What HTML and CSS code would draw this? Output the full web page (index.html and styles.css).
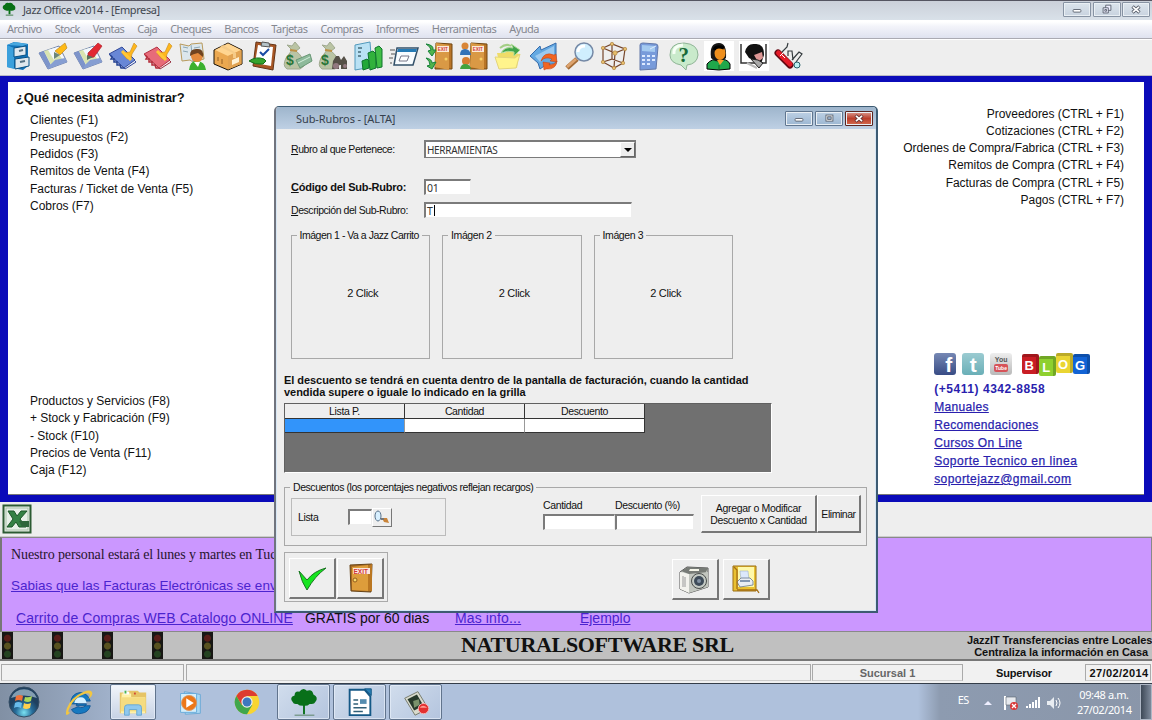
FILE: index.html
```html
<!DOCTYPE html>
<html lang="es">
<head>
<meta charset="utf-8">
<title>Jazz Office v2014</title>
<link rel="stylesheet" href="styles.css">
</head>
<body>
<div class="screen">
  <header class="titlebar">
    <svg class="app-icon" viewBox="0 0 16 16"><path d="M1 7Q0 4 3 3Q4 0 7 1Q11 0 12 3Q15 4 14 8Q11 10 9 9L9 13H7L7 9Q3 10 1 7Z" fill="#087016"/><path d="M4 14H12" stroke="#3c7a44"/></svg>
    <span class="title-text">Jazz Office v2014 - [Empresa]</span>
    <div class="winbtns">
      <span class="wb"><svg viewBox="0 0 28 15"><rect x="9.500" y="7.500" width="9" height="3" rx="1" fill="#fff" stroke="#555c68"/></svg></span>
      <span class="wb"><svg viewBox="0 0 28 15" fill="#eef" stroke="#555c68"><path d="M12.500 2.500H18.500V8.500H12.500Z"/><path d="M9.500 5.500H15.500V11.500H9.500Z"/><path d="M11.500 7.500H13.500V9.500H11.500Z"/></svg></span>
      <span class="wb"><svg viewBox="0 0 28 15"><path d="M10 4L18 11M18 4L10 11" stroke="#555c68" stroke-width="4"/><path d="M10.500 4.500L17.500 10.500M17.500 4.500L10.500 10.500" stroke="#fff" stroke-width="2"/></svg></span>
    </div>
  </header>
  <nav class="menu"><span>Archivo</span><span>Stock</span><span>Ventas</span><span>Caja</span><span>Cheques</span><span>Bancos</span><span>Tarjetas</span><span>Compras</span><span>Informes</span><span>Herramientas</span><span>Ayuda</span></nav>
  <div class="toolbar">
    <svg viewBox="0 0 30 30"><path d="M4 4L11 1L25 3V25L20 29L4 26Z" fill="#1272b8"/><path d="M4 4L11 7V28L4 26Z" fill="#3ba0dc"/><path d="M4 4L12 1L25 3L20 5Z" fill="#48a8df"/><path d="M11 7L23 5V14L11 16Z" fill="#dfe8ef" stroke="#075084"/><path d="M12 18L26 16V25L12 28Z" fill="#dfe7ed" stroke="#075084"/><path d="M16 10L20 9M17 21L22 20" stroke="#547184" stroke-width="2"/></svg>
    <svg viewBox="0 0 30 30"><path d="M1 12L21 5L29 21L10 28Z" fill="#f5f7fb" stroke="#7184ad"/><path d="M1 12L10 28L14 26L6 10Z" fill="#7d94ca"/><path d="M6 10L17 7L26 21L14 26Z" fill="#d9e4b1"/><path d="M10 9L20 6L22 11L16 19Z" fill="#f3f8ff"/><path d="M12 24L17 19L27 17L29 21L10 28Z" fill="#869ed2"/><path d="M17 10L27 2L29 7L22 14Z" fill="#ffba14" stroke="#c08a22" stroke-width=".7"/><path d="M16 11L22 14L16 18Z" fill="#6c867a"/></svg>
    <svg viewBox="0 0 30 30"><path d="M1 12L21 5L29 21L10 28Z" fill="#f5f7fb" stroke="#7184ad"/><path d="M1 12L10 28L14 26L6 10Z" fill="#7d94ca"/><path d="M6 10L17 7L26 21L14 26Z" fill="#d9e4b1"/><path d="M10 9L20 6L22 11L16 19Z" fill="#f3f8ff"/><path d="M12 24L17 19L27 17L29 21L10 28Z" fill="#869ed2"/><path d="M15 12L25 2L29 5L21 16L15 17Z" fill="#e22832" stroke="#ae2730" stroke-width=".7"/><path d="M14 14L20 16L14 19Z" fill="#58715f"/></svg>
    <svg viewBox="0 0 30 30"><path d="M3 15L15 8L28 21L17 28Z" fill="#edf0fa" stroke="#344b99"/><path d="M1 13L14 6L27 19L16 27Z" fill="#6887d6" stroke="#344b99"/><path d="M2 14L4 16L3 18L6 18L6 21L9 21L9 24L12 24L13 27L16 27" fill="none" stroke="#234192" stroke-width="1.500"/><path d="M14 12L22 11L26 2L29 5L24 13L23 18L19 18Z" fill="#ffb71c" stroke="#c58a22" stroke-width=".6"/><path d="M14 10L23 19" stroke="#ffc739" stroke-width="3"/></svg>
    <svg viewBox="0 0 30 30"><path d="M3 15L15 8L28 21L17 28Z" fill="#fbeaed" stroke="#973141"/><path d="M1 13L14 6L27 19L16 27Z" fill="#e76b79" stroke="#b43344"/><path d="M2 14L4 16L3 18L6 18L6 21L9 21L9 24L12 24L13 27L16 27" fill="none" stroke="#b32a37" stroke-width="1.500"/><path d="M14 12L22 11L26 2L29 5L24 13L23 18L19 18Z" fill="#ffb71c" stroke="#c58a22" stroke-width=".6"/><path d="M14 10L23 19" stroke="#ffc739" stroke-width="3"/></svg>
    <svg viewBox="0 0 30 30"><path d="M2 3L11 5L13 3L24 2L26 18L15 21L12 19L4 20Z" fill="#dce7ec" stroke="#b99a5c"/><path d="M13 4L15 21M5 6L10 7M5 10L10 11M16 7L22 6M16 10L22 9" stroke="#8ca7b5"/><path d="M11 29Q12 20 18 20Q27 20 28 29Z" fill="#3bb12f"/><circle cx="19" cy="15" r="6" fill="#e48b3d"/><path d="M12 14Q12 7 20 8Q26 8 25 16L20 12Q15 13 12 15Z" fill="#704420"/><path d="M16 21H22L20 26Z" fill="#fff"/></svg>
    <svg viewBox="0 0 30 30"><path d="M1 9L15 2L29 9V23L15 29L1 23Z" fill="#eba850" stroke="#171007"/><path d="M2 9L15 15L28 9L15 2.500Z" fill="#ffd590"/><path d="M15 15L28.500 9V23L15 28.500Z" fill="#e2a352"/><path d="M10 4L23 12V17L20 17V12L7 6Z" fill="#f5cb89"/><path d="M19 19L26 16V21L19 24Z" fill="#fff1d4"/><path d="M5 16V20M9 18V23" stroke="#966025"/></svg>
    <svg viewBox="0 0 30 30"><path d="M8 1L28 4L25 29L5 25Z" fill="#a85624" stroke="#653517"/><path d="M10 4L25 6L23 25L7 22Z" fill="#fff"/><path d="M14 1L21 2L22 6L13 5Z" fill="#b5c3c8" stroke="#555"/><path d="M12 11L15 14L21 8" fill="none" stroke="#194ba5" stroke-width="2"/><path d="M1 20Q8 15 16 18L18 20L15 23Q7 24 1 20Z" fill="#34a32e" stroke="#16711d"/></svg>
    <svg viewBox="0 0 30 30"><path d="M4 4L9 5L12 1L17 7L13 10Q21 16 21 25L17 28H4Q-1 25 3 17L9 9Z" fill="#bac4a4" stroke="#a0aa90"/><path d="M7 9L14 10" stroke="#bd9145" stroke-width="2"/><path d="M13 19L27 13L29 20L17 27Z" fill="#8dba9b" stroke="#6a9876"/><path d="M15 22L27 16" stroke="#d3eedb"/><text x="3" y="24" class="money">$</text></svg>
    <svg viewBox="0 0 30 30"><path d="M4 4L9 5L12 1L17 7L13 10Q21 16 21 25L17 28H4Q-1 25 3 17L9 9Z" fill="#bac4a4" stroke="#a0aa90"/><path d="M7 9L14 10" stroke="#bd9145" stroke-width="2"/><text x="3" y="24" class="money">$</text><path d="M15 20L18 15H21L23 19L26 15L29 20V28H23V24H21V28H14Z" fill="#555047"/><circle cx="18" cy="25" r="3" fill="#927980"/><circle cx="27" cy="25" r="2" fill="#927980"/></svg>
    <svg viewBox="0 0 30 30"><path d="M2 4L17 1L19 26L2 29Z" fill="#b9e1f4" stroke="#5299bc"/><path d="M5 7H9M5 11H8M5 15H8" stroke="#638897" stroke-width="2"/><path d="M9 20L14 18L16 20V27L10 29Z" fill="#22a839" stroke="#0e742d"/><path d="M15 12L20 10L23 13V27L17 29Z" fill="#31b13c" stroke="#0e742d"/><path d="M22 7L26 5L29 8V26L24 27Z" fill="#41be46" stroke="#0e742d"/></svg>
    <svg viewBox="0 0 30 30"><path d="M8 7H29L24 24H5Z" fill="#f8fcff" stroke="#325069" stroke-width="1.500"/><path d="M9 8H28L27 11H8Z" fill="#267bb5"/><path d="M12 15H20L18 20H10Z" fill="#fff" stroke="#778"/><path d="M1 9H6M2 13H6M0 17H4M1 22H3" stroke="#555"/></svg>
    <svg viewBox="0 0 30 30"><path d="M12 2L28 3V28L11 28Z" fill="#b97527" stroke="#724812"/><path d="M12 2L25 4V29L11 26Z" fill="#d99945"/><path d="M13 5H25V11H13Z" fill="#fbead8"/><text x="13.700" y="10" class="exit">EXIT</text><circle cx="22" cy="18" r="1.500" fill="#f7d166"/><path d="M2 3Q10 4 9 9L12 9L8 15L4 10L7 9Q7 6 2 3ZM2 17Q8 18 8 22L12 21L8 28L3 25L6 24Q6 20 2 17Z" fill="#50b44d" stroke="#17823a"/></svg>
    <svg viewBox="0 0 30 30"><path d="M12 2L28 3V28L11 28Z" fill="#b97527" stroke="#724812"/><path d="M12 2L25 4V29L11 26Z" fill="#d99945"/><path d="M13 5H25V11H13Z" fill="#fbead8"/><text x="13.700" y="10" class="exit">EXIT</text><circle cx="22" cy="18" r="1.500" fill="#f7d166"/><circle cx="6" cy="5" r="3.500" fill="#d98637"/><path d="M1 14Q1 8 6 8Q11 8 12 14Z" fill="#3272b8"/><circle cx="7" cy="20" r="4" fill="#d67d31"/><path d="M1 28Q2 23 6 23Q11 23 12 28Z" fill="#43a340"/></svg>
    <svg viewBox="0 0 30 30"><path d="M3 12H11L13 9L25 13L23 27L6 26Z" fill="#efdc68"/><path d="M1 16L21 17L26 13L22 27L5 28Z" fill="#fff48c" stroke="#e3d47b"/><path d="M7 12Q11 5 19 7L17 3L26 9L20 15L20 11Q14 9 7 12Z" fill="#41a44b" stroke="#afdc95"/><path d="M6 7Q12 2 17 5" stroke="#a5cf87" stroke-width="2" fill="none"/></svg>
    <svg viewBox="0 0 30 30"><path d="M1 15L11 5L12 9L27 2V23Q18 22 11 28L9 22Z" fill="#64a9e2" stroke="#356bab"/><path d="M6 15L25 5V14Q15 13 11 21Z" fill="#9ccaf0"/><path d="M12 20Q15 10 25 14L27 13L28 21L21 20L23 18Q16 15 12 20Z" fill="#f06522" stroke="#bd4219" stroke-width=".5"/><path d="M14 21L21 22L20 24Q25 24 28 20Q27 29 17 28L15 29Z" fill="#f06522" stroke="#bd4219" stroke-width=".5"/></svg>
    <svg viewBox="0 0 30 30"><path d="M3 27L13 18" stroke="#a36b36" stroke-width="5"/><path d="M3 26L12 18" stroke="#dda36e" stroke-width="3"/><circle cx="20" cy="11" r="9" fill="#cfeefe" stroke="#7589a6" stroke-width="1.500"/><path d="M14 11Q14 5 21 5" stroke="#fff" fill="none" stroke-width="3"/></svg>
    <svg viewBox="0 0 30 30"><path d="M4 7L13 3L26 8L24 22L15 27L4 21ZM4 7L16 12L26 8M16 12L15 27M13 3L13 18L4 21M13 18L24 22" fill="none" stroke="#75452a" stroke-width="1.200"/><g fill="#e5bd6d" stroke="#aa7b36" stroke-width=".6"><circle cx="4" cy="7" r="1.700"/><circle cx="13" cy="3" r="1.700"/><circle cx="26" cy="8" r="1.700"/><circle cx="24" cy="22" r="1.700"/><circle cx="15" cy="27" r="1.700"/><circle cx="4" cy="21" r="1.700"/><circle cx="16" cy="12" r="2.200"/></g></svg>
    <svg viewBox="0 0 30 30"><path d="M6 4Q6 2 9 2L22 3Q24 3 24 6L22 28L6 29Z" fill="#789bda" stroke="#6278a9"/><path d="M8 4L21 5L21 11L8 10Z" fill="#a4caf0"/><path d="M16 8L22 5" stroke="#dfebfc"/><g fill="#dce9ff"><path d="M8 14H11V16H8ZM13 14H16V16H13ZM18 14H21V16H18ZM8 18H11V20H8ZM13 18H16V20H13ZM18 18H21V20H18ZM8 22H11V24H8ZM13 22H16V24H13Z"/></g></svg>
    <svg viewBox="0 0 30 30"><path d="M12 24Q1 22 1 14Q1 2 15 2Q29 3 29 14Q28 23 18 24L17 29Z" fill="#c9eacb" stroke="#8fb496"/><path d="M5 13Q4 5 14 4" stroke="#f7fff6" stroke-width="3" fill="none"/><text x="9.500" y="20.500" class="question">?</text></svg>
    <svg class="whiteicon" viewBox="0 0 30 30"><path d="M3 28V23Q8 17 15 19Q23 17 26 23V28Q15 30 3 28Z" fill="#20a84b" stroke="#000"/><path d="M7 17Q5 2 15 2Q23 2 22 17L17 21L11 20Z" fill="#171717"/><ellipse cx="16" cy="12" rx="5.500" ry="7" fill="#ee8f1e"/><path d="M10 9Q12 4 20 7" stroke="#000" stroke-width="3" fill="none"/><path d="M13 19L16 24L20 19Z" fill="#f5a22e"/><path d="M15 24V28" stroke="#145e23"/></svg>
    <svg class="whiteicon" viewBox="0 0 30 30"><path d="M2 3V22H27V3" fill="#fff" stroke="#333" stroke-width="1.500"/><path d="M6 11Q8 2 16 3Q25 2 25 14L22 23L10 17Z" fill="#111"/><path d="M15 14L23 11L24 17L19 21Z" fill="#dc9694"/><path d="M12 18L20 27L24 22L19 19Z" fill="#aaa" stroke="#222"/><path d="M8 22L18 27" stroke="#bbb" stroke-width="2"/></svg>
    <svg viewBox="0 0 30 30"><path d="M4 12L16 24" stroke="#630711" stroke-width="7" stroke-linecap="round"/><path d="M4.500 12L16 23" stroke="#e51b28" stroke-width="5" stroke-linecap="round"/><path d="M8 11L13 6L14 2M14 15L14 10L18 10L19 19M18 19L25 11L28 13L22 21" fill="none" stroke="#343b3e" stroke-width="1.200"/><circle cx="23" cy="24" r="3" fill="#bdf2f3" stroke="#265e69"/><path d="M7 13L11 17M9 12L6 15" stroke="#fff"/></svg>
  </div>
  <main class="workspace">
    <section class="panel">
      <div class="col left">
        <div><h1>¿Qué necesita administrar?</h1>
        <ul class="tasks"><li>Clientes (F1)</li><li>Presupuestos (F2)</li><li>Pedidos (F3)</li><li>Remitos de Venta (F4)</li><li>Facturas / Ticket de Venta (F5)</li><li>Cobros (F7)</li></ul></div>
        <ul class="tasks low"><li>Productos y Servicios (F8)</li><li>+ Stock y Fabricación (F9)</li><li>- Stock (F10)</li><li>Precios de Venta (F11)</li><li>Caja (F12)</li></ul>
      </div>
      <div class="col right">
        <ul class="tasks end"><li>Proveedores (CTRL + F1)</li><li>Cotizaciones (CTRL + F2)</li><li>Ordenes de Compra/Fabrica (CTRL + F3)</li><li>Remitos de Compra (CTRL + F4)</li><li>Facturas de Compra (CTRL + F5)</li><li>Pagos (CTRL + F7)</li></ul>
        <div class="contact">
          <div class="social">
            <span class="soc fb">f</span><span class="soc tw">t</span><span class="soc yt"><i>You</i><b>Tube</b></span>
            <span class="blog"><b class="red">B</b><b class="green">L</b><b class="yellow">O</b><b class="bluec">G</b></span>
          </div>
          <p class="phone">(+5411) 4342-8858</p>
          <a>Manuales</a><a>Recomendaciones</a><a>Cursos On Line</a><a class="wide">Soporte Tecnico en linea</a><a class="mail">soportejazz@gmail.com</a>
        </div>
      </div>
    </section>
  </main>
  <div class="excelbar"><svg viewBox="0 0 30 30"><rect x="1.500" y="1.500" width="27" height="27" fill="#e8f0e8" stroke="#2c5b33" stroke-width="2"/><rect x="4" y="4" width="22" height="22" fill="none" stroke="#a9c3a9"/><path d="M6 7H12L15 12L19 7H25L18 15L24 23H17L14 18L10 23H5L11 15Z" fill="#348144" stroke="#1d5728"/><path d="M17 17H27V23H20Z" fill="#2e673b"/></svg></div>
  <section class="news">
    <p class="serif">Nuestro personal estará el lunes y martes en Tuc</p>
    <p class="fact"><a>Sabias que las Facturas Electrónicas se envi</a></p>
    <p class="cart"><a class="cat">Carrito de Compras WEB Catalogo ONLINE</a><span>GRATIS por 60 dias</span><a class="mas">Mas info...</a><a>Ejemplo</a></p>
  </section>
  <div class="brandbar">
    <div class="lights"><i></i><i></i><i></i><i></i><i></i></div>
    <strong class="brand">NATURALSOFTWARE SRL</strong>
    <div class="transfer"><p class="t1">JazzIT Transferencias entre Locales</p><p class="t2">Centraliza la información en Casa</p><p class="t3">Central</p></div>
  </div>
  <div class="status"><span class="cell s1"></span><span class="cell s2"></span><span class="cell s3">Sucursal 1</span><span class="s4">Supervisor</span><span class="cell s5">27/02/2014</span></div>
  <footer class="taskbar">
    <span class="task orb"><svg viewBox="0 0 34 34"><defs><radialGradient id="orb" cy=".85"><stop stop-color="#7be2f2"/><stop offset=".55" stop-color="#266d9b"/><stop offset="1" stop-color="#1f405f"/></radialGradient></defs><circle cx="17" cy="17" r="15" fill="url(#orb)" stroke="#344d64"/><path d="M4 13A14 14 0 0 1 30 13Q17 8 4 13Z" fill="#b9cfdd" opacity=".65"/><path d="M9 11Q13 9 16 11L15 16Q12 14 8 16Z" fill="#ef713a"/><path d="M18 12Q22 13 25 11L24 16Q21 18 17 16Z" fill="#a9d85b"/><path d="M8 18Q11 16 15 18L14 23Q10 21 7 23Z" fill="#68bceb"/><path d="M17 18Q20 20 24 18L23 23Q19 25 16 23Z" fill="#ffd04d"/></svg></span>
    <span class="task ie"><svg viewBox="0 0 34 34"><path d="M9 19H25Q22 25 16 22L9 25Q12 31 20 29Q27 28 29 21H14Q16 12 23 16H29Q26 7 18 7Q9 8 8 18Z" fill="#1679c0" stroke="#125796"/><path d="M12 18Q13 12 19 12Q24 12 25 18Z" fill="#d6f0ff"/><path d="M8 28Q1 35 4 24Q8 12 22 6Q30 3 31 7Q32 10 27 14Q31 6 24 8Q12 12 7 23Q4 29 8 28Z" fill="#f2c641"/></svg></span>
    <span class="task btn active"><svg viewBox="0 0 34 34"><path d="M3 7H10L12 5H22L24 7H31V29H3Z" fill="#e6c467"/><path d="M5 8H15V12H30V29H4Z" fill="#fff1a9"/><path d="M4 12H30V27H4Z" fill="#f5dc81"/><path d="M7 6H13V9H7Z" fill="#fff"/><path d="M8 5H10V8H8Z" fill="#4ab252"/><path d="M18 7H20V9H18Z" fill="#d34a33"/><path d="M8 31V23Q8 20 11 20H23Q26 20 26 23V31H21V25H13V31Z" fill="#8ec8ef" stroke="#67a9d3"/></svg></span>
    <span class="task wmp"><svg viewBox="0 0 34 34"><path d="M11 6L28 9V29L12 30Z" fill="#a9d7f2" stroke="#6ca9d4"/><path d="M7 8H24V28H7Z" fill="#d5effb" stroke="#65aadb"/><circle cx="16" cy="18" r="8" fill="#ed7718" stroke="#d79768"/><path d="M13 13L21 18L13 23Z" fill="#fff"/></svg></span>
    <span class="task chrome"><svg viewBox="0 0 34 34"><circle cx="17" cy="17" r="13" fill="#f8d531"/><path d="M5.700 10.500A13 13 0 0 1 28.300 10.500H17L11.400 20.300Z" fill="#dd3c30"/><path d="M5.700 10.500A13 13 0 0 0 17 30L22.600 20.300H11.400Z" fill="#40a64b"/><circle cx="17" cy="17" r="6" fill="#eee"/><circle cx="17" cy="17" r="4.700" fill="#3d78bf"/></svg></span>
    <span class="task btn tree"><svg viewBox="0 0 34 34"><path d="M5 17Q1 12 7 10Q7 5 12 6Q16 1 20 5Q26 3 27 9Q33 12 29 17Q28 20 23 19Q21 21 18 21V30H16V21Q12 21 10 19Q6 20 5 17Z" fill="#087019"/><path d="M7 31H28" stroke="#568161"/></svg></span>
    <span class="task btn doc"><svg viewBox="0 0 34 34"><path d="M6 4H22L28 11V31H6Z" fill="#fff" stroke="#145886" stroke-width="2"/><path d="M22 3H29V10Z" fill="#287fb5" stroke="#145886"/><path d="M10 15H15M10 19H15M10 23H24M10 27H20" stroke="#315f77" stroke-width="1.600"/><path d="M17 14H24V19H17Z" fill="#568db0"/></svg></span>
    <span class="task btn rec"><svg viewBox="0 0 34 34"><path d="M5 13L19 6L30 24L16 31Z" fill="#d8dacd" stroke="#737769"/><path d="M8 14L18 9L25 21L15 26Z" fill="#27392b"/><path d="M14 16L20 14L21 20L15 23Z" fill="#7a926c"/><circle cx="25" cy="24" r="5.500" fill="#e33030" stroke="#f6b5b5"/><path d="M21 23Q24 19 29 23Z" fill="#ff9c91"/></svg></span>
    <div class="tray"><span class="es">ES</span><svg class="arrow" viewBox="0 0 8 8"><path d="M0 6L4 2L8 6Z" fill="#eef"/></svg><svg class="trayicons" viewBox="0 0 60 18"><path d="M3 2V16" stroke="#fff" stroke-width="2"/><path d="M4 3H14V11H4Z" fill="#e6e9ee" stroke="#59616c" stroke-width=".6"/><circle cx="12" cy="12" r="4" fill="#d93838"/><path d="M10 10L14 14M14 10L10 14" stroke="#fff" stroke-width="1.300"/><path d="M25 14V12M28 14V10M31 14V8M34 14V6M37 14V3" stroke="#fff" stroke-width="2"/><path d="M45 7H48L52 3V15L48 11H45Z" fill="#e8ecf1"/><path d="M54 6Q56 9 54 12M56 4Q60 9 56 14" stroke="#fff" fill="none"/></svg><span class="clock"><span>09:48 a.m.</span><span>27/02/2014</span></span><i class="peek"></i></div>
  </footer>

  <section class="dialog">
    <header class="dtitle"><span>Sub-Rubros - [ALTA]</span><div class="winbtns">
      <span class="wb"><svg viewBox="0 0 28 15"><rect x="9.500" y="7.500" width="9" height="3" rx="1" fill="#fff" stroke="#555c68"/></svg></span>
      <span class="wb"><svg viewBox="0 0 28 15"><rect x="10.500" y="3.500" width="8" height="7" fill="#fff" stroke="#555c68"/><rect x="12.500" y="5.500" width="4" height="3" fill="#9cb5d1" stroke="#555c68"/></svg></span>
      <span class="wb close"><svg viewBox="0 0 28 15"><path d="M10 4L18 11M18 4L10 11" stroke="#633" stroke-width="4"/><path d="M10.500 4.500L17.500 10.500M17.500 4.500L10.500 10.500" stroke="#fff" stroke-width="2"/></svg></span>
    </div></header>
    <div class="dbody">
      <div class="row r1"><label><u>R</u>ubro al que Pertenece:</label><span class="combo"><span>HERRAMIENTAS</span><i><svg viewBox="0 0 8 5"><path d="M0 0H8L4 4Z"/></svg></i></span></div>
      <div class="row r2"><label class="strong"><u>C</u>ódigo del Sub-Rubro:</label><span class="input code">01</span></div>
      <div class="row r3"><label><u>D</u>escripción del Sub-Rubro:</label><span class="input desc">T<i class="caret"></i></span></div>
      <div class="images"><div class="frame"><span class="legend first">Imágen 1 - Va a Jazz Carrito</span>2 Click</div><div class="frame"><span class="legend">Imágen 2</span>2 Click</div><div class="frame"><span class="legend">Imágen 3</span>2 Click</div></div>
      <p class="note"><span>El descuento se tendrá en cuenta dentro de la pantalla de facturación, cuando la cantidad</span><br><span>vendida supere o iguale lo indicado en la grilla</span></p>
      <div class="gridbox"><div class="cells"><b>Lista P.</b><b>Cantidad</b><b>Descuento</b><i class="sel"></i><i></i><i></i></div></div>
      <div class="discounts"><span class="legend long">Descuentos (los porcentajes negativos reflejan recargos)</span>
        <div class="listbox"><span>Lista</span><i class="input mini"></i><i class="lookup"><svg viewBox="0 0 16 16"><ellipse cx="4" cy="6" rx="3" ry="5" fill="#d8f0ff" stroke="#59738c"/><path d="M8 8L13 8L15 13L10 12Z" fill="#c98338"/><path d="M7 9H10" stroke="#777" stroke-width="2"/></svg></i></div>
        <div class="qty"><span>Cantidad</span><span>Descuento (%)</span><i class="input"></i><i class="input"></i></div>
        <button class="add">Agregar o Modificar<br>Descuento x Cantidad</button><button class="del">Eliminar</button>
      </div>
      <div class="actions">
        <div class="pair"><button><svg viewBox="0 0 36 34"><path d="M5 10L13 19Q20 10 32 7Q21 15 13 29Q8 22 5 10Z" fill="#16e51f" stroke="#197521"/></svg></button><button><svg viewBox="0 0 36 34"><path d="M8 4L30 3L29 31L9 30Z" fill="#a96b22" stroke="#674316"/><path d="M10 6L26 4V30L10 29Z" fill="#dd9d3b"/><path d="M26 5L30 3V30H26Z" fill="#ba7722"/><path d="M11 7H28V13H11Z" fill="#fce6dd"/><text x="11.500" y="12.500" class="exitbig">EXIT</text><circle cx="13" cy="19" r="2" fill="#f8da69" stroke="#935c20"/></svg></button></div>
        <div class="rightpair"><button><svg viewBox="0 0 36 34"><path d="M3 10L10 5L31 6V25L12 31L3 27Z" fill="#ccd0ca" stroke="#555"/><path d="M3 10L12 12V31L3 27Z" fill="#f3f3ed"/><path d="M4 9L11 5L31 6L28 12L12 12Z" fill="#777b76"/><path d="M13 7H22V9H12Z" fill="#f6f6ea"/><path d="M12 12L31 10V25L12 31Z" fill="#c2c6bf"/><circle cx="22" cy="19" r="7.500" fill="#c4cac4" stroke="#4a4d4b"/><circle cx="22" cy="19" r="5" fill="#3e4b59"/><circle cx="22" cy="19" r="2" fill="#8191a2"/><path d="M6 14V25M8 15V25" stroke="#999"/></svg></button><button><svg viewBox="0 0 36 34"><path d="M5 4H28V29H5Z" fill="#eac132" stroke="#9b6f13"/><path d="M10 5H26V25H10Z" fill="#fff9aa"/><path d="M12 9H20L21 18H13Z" fill="#dce8fb" stroke="#9badc6" stroke-width=".6"/><path d="M9 20L13 16H22L25 19V23L12 25Z" fill="#e9eef4" stroke="#65758c" stroke-width=".8"/><path d="M12 19H22" stroke="#8397b1" stroke-width="2"/><path d="M6 5L9 8V27M9 28H29L31 31" fill="none" stroke="#a46e16" stroke-width="1.300"/></svg></button></div>
      </div>
    </div>
  </section>
</div>
</body>
</html>
```
FILE: styles.css
```css
*{box-sizing:border-box}
body{margin:0;font-family:"Liberation Sans",Arial,sans-serif;font-size:12px;color:#111}
p,ul,h1{margin:0;padding:0}
ul{list-style:none}
i,b{font-style:normal}
svg{display:block}
.screen{position:relative;width:1152px;height:720px;overflow:hidden;background:#ededed;display:flex;flex-direction:column;white-space:nowrap}

.titlebar{height:20px;border-top:1px solid #555561;background:linear-gradient(#cbd0d9,#d9e1e9);display:flex;align-items:center;padding:0 2px 2px;flex:none}
.app-icon{width:15px;height:15px}
.title-text{font:11px "Noto Sans",sans-serif;letter-spacing:-.39px;color:#414750;margin-left:6px;flex:1}
.winbtns{display:flex;gap:1.500px}
.wb{width:28px;height:15px;border:1px solid #8793a3;border-radius:1px;background:linear-gradient(#dce4ec,#c8d3df);box-shadow:inset 0 0 0 1px #e9eff4}
.wb svg{width:26px;height:13px}
.menu{height:19px;flex:none;display:flex;gap:13px;padding:1px 0 0 7px;background:linear-gradient(#fff 0 10%,#f3f4fa 35%,#dfe2ef);border-bottom:1px solid #aaaab2;font:11px/16px "Noto Sans",sans-serif;letter-spacing:-.55px;color:#858891}
.toolbar{height:37px;flex:none;border-top:1px solid #fff;border-bottom:1px solid #b9b9c4;background:#eee;display:flex;padding:1px 0 0 3px;gap:5.050px}
.toolbar svg{width:30px;height:30px;flex:none}
.whiteicon{background:#fff}
.money{font:bold 14px "Liberation Sans",sans-serif;fill:#297538}
.exit{font:bold 4.500px "Liberation Sans",sans-serif;fill:#d03832}
.exitbig{font:bold 6.500px "Liberation Sans",sans-serif;fill:#d03832}
.question{font:bold 21px "Liberation Serif",serif;fill:#186b38}
.workspace{height:426px;flex:none;background:#0b0bb9;padding:6px 8px 7px}
.panel{height:413px;background:#fff;display:flex;justify-content:space-between;border-bottom:1px solid #777}
.col{display:flex;flex-direction:column;justify-content:space-between}
.left{padding:8px 0 15px 8px}
h1{font-size:13px;line-height:15px;letter-spacing:-.1px}
.tasks{margin:7px 0 0 14px;line-height:17.150px;font-size:12px;letter-spacing:-.03px}
.right{padding:24px 20px 6px 0}
.end{text-align:right;margin:0}
.contact{color:#2a1fae;margin-left:31px;font-size:12px;line-height:18px}
.contact a{display:block;text-decoration:underline;-webkit-text-stroke:.25px #2a1fae;letter-spacing:.33px}
.contact .wide{letter-spacing:.5px}
.contact .mail{letter-spacing:.43px}
.phone{font-weight:bold;letter-spacing:.55px}
.social{display:flex;align-items:center;gap:6px;height:27px;margin-bottom:3px}
.soc{width:22px;height:22px;border-radius:3px;color:#fff;font:bold 21px/23px "Liberation Sans",sans-serif;text-align:center}
.fb{background:linear-gradient(#7688b4,#384c85);text-align:right;padding-right:4px}
.tw{background:linear-gradient(#9bcbd1,#6aafb7)}
.yt{background:linear-gradient(#eee,#b9b9b9);font-size:7px;line-height:8px;color:#555;display:flex;flex-direction:column;justify-content:center;padding:2px 4px}
.yt b{background:#d65359;color:#fff;border-radius:2px;font-size:5px}
.blog{display:flex;margin-left:4px}
.blog b{width:17px;height:20px;text-align:center;color:#fff;font-size:13px;line-height:18px;border-top:3px solid #0003;border-right:3px solid #0003;border-radius:2px}
.red{background:#c91d24}.green{background:#8ed02f;transform:translateY(2px)}.yellow{background:#ead532;transform:translateY(-1px)}.bluec{background:#1263d5}

.excelbar{height:35px;flex:none;background:#eee;border-bottom:1px solid #ccc;padding:2px}
.excelbar svg{width:30px;height:30px}
.news{height:95px;flex:none;background:#cb97ff;border:1px solid #898989;border-left:2px solid #777;padding:8px 0 0 9px}
.news a{color:#4b24cf;text-decoration:underline}
.serif{font:14px/17px "Liberation Serif",serif;letter-spacing:-.11px;color:#28152e}
.fact{font-size:13.500px;line-height:17px;margin-top:14px}
.cart{font-size:14px;line-height:17px;margin:16px 0 0 5px;display:flex}
.cart .cat{letter-spacing:.08px}
.cart span{margin-left:12px;width:150px}
.cart .mas{width:66px;margin-right:59px;letter-spacing:.15px}
.brandbar{height:29px;flex:none;background:#c0c0c0;border-bottom:2px solid #777;display:flex;overflow:hidden}
.lights{display:flex;gap:39px;flex:none;width:461px;padding-left:2px}
.lights i{width:11px;height:27px;background:radial-gradient(circle at 50% 23%,#571c18 0 3px,transparent 4px),radial-gradient(circle at 50% 52%,#57511f 0 3px,transparent 4px),radial-gradient(circle at 50% 82%,#244321 0 3px,transparent 4px),#171714}
.brand{font:bold 22px/26px "Liberation Serif",serif;letter-spacing:-.32px;flex:1}
.transfer{width:186px;flex:none;text-align:center;font-weight:bold;font-size:11px;line-height:12px;padding-top:2px;letter-spacing:-.07px}
.t1{margin-left:1px}
.t2{text-align:right;padding-right:4px}
.t3{height:12px}
.status{height:22px;flex:none;display:flex;align-items:center;background:#f1f1f1;font-weight:bold;font-size:11px;padding:1px 1px 0}
.cell{height:17px;border:1px solid;border-color:#aaa #aaa #ccc #aaa;line-height:16px;text-align:center}
.s1{width:183px}.s2{width:625px;margin-left:2px}.s3{width:151px;margin-left:1px;color:#666}.s4{width:122px;text-align:center;letter-spacing:-.15px}.s5{flex:1;letter-spacing:.4px;padding-left:2px}
.taskbar{height:37px;flex:none;background:linear-gradient(90deg,#8190a4 0,#91a1b8 60px,#afc1dc 160px,#afc1dc 918px,#8d9bb0 940px,#8a96a9);border-top:1px solid #343d49;display:flex}
.task{height:36px;display:flex;justify-content:center;align-items:center}
.task svg{width:32px;height:32px}
.orb{width:48px}.orb svg{width:34px;height:34px}.ie{width:62px}
.btn{border:1px solid #61748d;border-radius:2px;background:linear-gradient(135deg,#e2ebf5aa,#b6c6dfaa);box-shadow:inset 0 0 0 1px #e8f0faaa}
.active{width:46px;background:linear-gradient(#f2f5fa,#c6d2e5)}.wmp{width:67px}.chrome{width:48px}.tree{width:53px;margin-left:6px}.doc{width:53px;margin-left:3px}.rec{width:53px;margin-left:3px}
.tray{margin-left:auto;display:flex;height:36px;color:#fff;font:11px/15px "Noto Sans",sans-serif;letter-spacing:-.4px}
.es{padding-top:8px;margin-right:15px}
.arrow{width:8px;height:8px;margin:15px 10px 0 0}
.trayicons{width:60px;height:18px;margin:10px 15px 0 0}
.clock{display:flex;flex-direction:column;text-align:center;padding-top:3px;width:54px}
.peek{width:12px;margin-left:9px;background:linear-gradient(90deg,#3d4856,#7e8a9b);border:1px solid #aeb7c5}

.dialog{position:absolute;left:274px;top:106px;width:604px;height:507px;border:2px solid #3d5b73;border-width:1px 2px 2px;border-left-color:#70747e;border-radius:5px 5px 0 0;background:#eee;font-size:10.500px;letter-spacing:-.35px;box-shadow:inset 0 0 0 1px #d6e6f4}
.dtitle{height:22px;background:linear-gradient(#9eb5cc,#bed0e4);border-radius:4px 4px 0 0;display:flex;align-items:center;padding:1px 3px 0 20px;font:11px "Noto Sans",sans-serif;color:#35404d}
.dtitle>span{flex:1;letter-spacing:-.1px}
.dtitle .wb{background:linear-gradient(#bdd0e4,#9cb7d2);border-color:#60768f}
.dtitle .winbtns{gap:2px}
.dtitle .close{background:linear-gradient(#dc9b90,#ba3e2b 50%,#d46c50);border-color:#5b2520}
.dbody{padding:11px 0 0 8px;display:flex;flex-direction:column}
.row{display:flex;align-items:center;padding-left:7px;height:18px}
.row label{width:133px;letter-spacing:-.44px}
.row .strong{font-weight:bold;font-size:11px;letter-spacing:-.25px}
.r2{margin-top:20px}.r3{margin-top:5px}
.input{height:16px;background:#fff;border:1px solid #eee;border-top:2px solid #7b7b7b;border-left:2px solid #7b7b7b;padding-left:1px;font:10.500px/14px "Noto Sans",sans-serif;color:#333;display:flex}
.code{width:47px}.desc{width:208px}
.caret{width:1px;height:11px;background:#000;margin:1px 0 0 1px}
.combo{width:212px;height:18px;background:#fff;border:2px solid #7b7b7b;border-width:2px 1px 1px 2px;display:flex;justify-content:space-between;font:10px/16px "Noto Sans",sans-serif;letter-spacing:-.3px;padding-left:1px;color:#333}
.combo i{width:15px;background:#eee;border:1px solid #fff;border-color:#fff #666 #666 #fff;padding:5px 3px}
.combo svg{width:8px;height:5px}
.images{display:flex;gap:12px;margin:16px 0 0 6.500px}
.frame{position:relative;width:139.500px;height:124px;border:1px solid #a8a8a8;display:flex;align-items:center;justify-content:center;padding:0 0 8px 5px;letter-spacing:-.3px;font-size:11px}
.legend{position:absolute;left:5px;top:-7px;background:#eee;padding:0 3px;font-size:10.500px;line-height:13px;letter-spacing:-.38px}
.first{letter-spacing:-.48px}
.long{letter-spacing:-.44px}
.note{font-weight:bold;font-size:11px;line-height:12px;margin-top:15px;letter-spacing:-.05px}
.gridbox{width:488px;height:70px;margin-top:5px;background:#707070;border:1px solid #606060;border-color:#606060 #fff #fff #606060}
.cells{display:grid;width:360px;grid-template-columns:repeat(3,120px);grid-template-rows:15px 14px}
.cells b,.cells i{border-right:1px solid #333;border-bottom:1px solid #333;background:#fff;text-align:center;font-weight:normal;line-height:14px}
.cells b{background:#eee}
.cells i{border-right-color:#999}.cells .sel{background:#3294fa}
.cells i:last-child{border-right-color:#333}
.discounts{position:relative;width:583px;height:59px;border:1px solid #a8a8a8;margin-top:14px;display:flex;padding-left:6px}
.listbox{width:155px;height:38px;border:1px solid #bbb;margin-top:10px;display:flex;align-items:center;padding-left:6px}
.listbox span{width:50px}
.mini{width:24px}
.lookup{width:20px;height:19px;border:1px solid;border-color:#fff #777 #777 #fff;padding:1px}
.lookup svg{width:16px;height:16px}
.qty{display:grid;grid-template-columns:72px 79px;grid-template-rows:15px 16px;margin:11px 7px 0 97px}
button{font:10.500px/12px "Liberation Sans",sans-serif;color:#111;background:#eee;border:1px solid;border-color:#fff #777 #777 #fff;border-right-width:2px;border-bottom-width:2px;padding:0}
.add{width:116px;height:38px;margin-top:7px;letter-spacing:-.33px}.del{width:44px;height:38px;margin-top:7px;letter-spacing:-.45px}
.actions{display:flex;margin-top:6px}
.pair{width:104px;height:50px;border:1px solid #aaa;display:flex;gap:1px;padding:5px 0 0 4px}
.actions button{width:47px;height:41px;display:flex;justify-content:center;align-items:center}
.actions svg{width:36px;height:34px}
.rightpair{display:flex;gap:4px;margin:7px 0 0 284px}
```
